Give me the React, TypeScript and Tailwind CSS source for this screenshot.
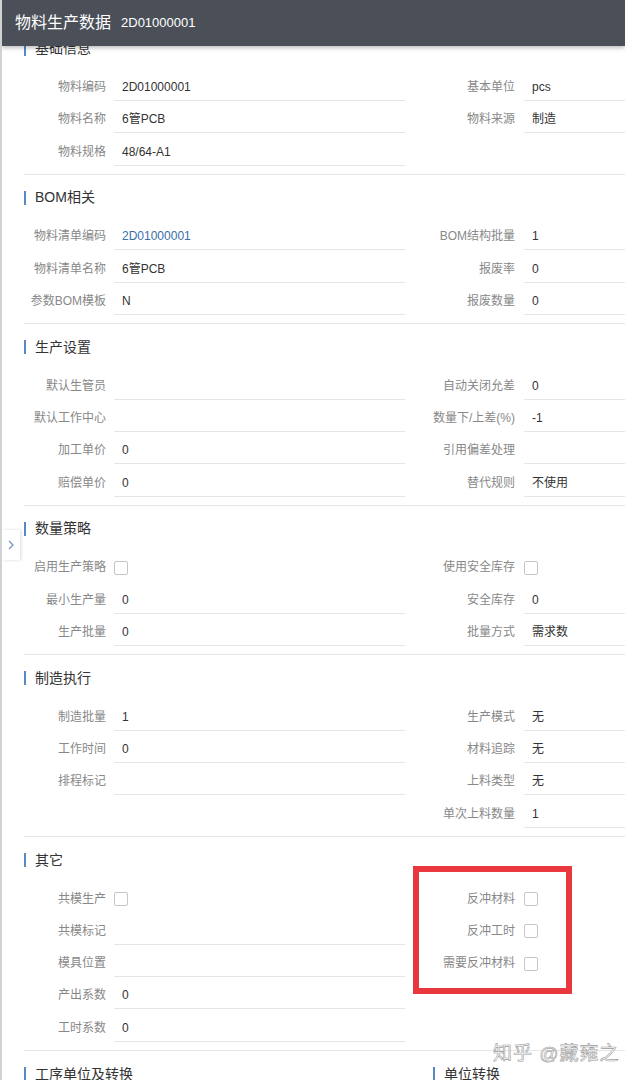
import React from 'react'

type Field = { label: string; value?: string; checkbox?: boolean; link?: boolean } | null
type Section = { title: string; rows: [Field, Field][] }

const sections: Section[] = [
    {
        title: '基础信息',
        rows: [
            [{ label: '物料编码', value: '2D01000001' }, { label: '基本单位', value: 'pcs' }],
            [{ label: '物料名称', value: '6管PCB' }, { label: '物料来源', value: '制造' }],
            [{ label: '物料规格', value: '48/64-A1' }, null],
        ],
    },
    {
        title: 'BOM相关',
        rows: [
            [{ label: '物料清单编码', value: '2D01000001', link: true }, { label: 'BOM结构批量', value: '1' }],
            [{ label: '物料清单名称', value: '6管PCB' }, { label: '报废率', value: '0' }],
            [{ label: '参数BOM模板', value: 'N' }, { label: '报废数量', value: '0' }],
        ],
    },
    {
        title: '生产设置',
        rows: [
            [{ label: '默认生管员', value: '' }, { label: '自动关闭允差', value: '0' }],
            [{ label: '默认工作中心', value: '' }, { label: '数量下/上差(%)', value: '-1' }],
            [{ label: '加工单价', value: '0' }, { label: '引用偏差处理', value: '' }],
            [{ label: '赔偿单价', value: '0' }, { label: '替代规则', value: '不使用' }],
        ],
    },
    {
        title: '数量策略',
        rows: [
            [{ label: '启用生产策略', checkbox: true }, { label: '使用安全库存', checkbox: true }],
            [{ label: '最小生产量', value: '0' }, { label: '安全库存', value: '0' }],
            [{ label: '生产批量', value: '0' }, { label: '批量方式', value: '需求数' }],
        ],
    },
    {
        title: '制造执行',
        rows: [
            [{ label: '制造批量', value: '1' }, { label: '生产模式', value: '无' }],
            [{ label: '工作时间', value: '0' }, { label: '材料追踪', value: '无' }],
            [{ label: '排程标记', value: '' }, { label: '上料类型', value: '无' }],
            [null, { label: '单次上料数量', value: '1' }],
        ],
    },
    {
        title: '其它',
        rows: [
            [{ label: '共模生产', checkbox: true }, { label: '反冲材料', checkbox: true }],
            [{ label: '共模标记', value: '' }, { label: '反冲工时', checkbox: true }],
            [{ label: '模具位置', value: '' }, { label: '需要反冲材料', checkbox: true }],
            [{ label: '产出系数', value: '0' }, null],
            [{ label: '工时系数', value: '0' }, null],
        ],
    },
]

function SectionTitle({ text }: { text: string }) {
    return (
        <div className="flex items-center h-[20px] gap-[9px]">
            <span className="w-[2px] h-[14px] bg-[#5a87c0]" />
            <span className="text-[14px] text-[#333]">{text}</span>
        </div>
    )
}

function Cell({ field, gap }: { field: Field; gap: string }) {
    if (!field) return <div />
    return (
        <div className={`grid grid-cols-[82px_1fr] ${gap}`}>
            <div className="text-right leading-[27px] text-[12px] text-[#888] whitespace-nowrap">{field.label}</div>
            {field.checkbox ? (
                <div className="pt-[6.5px]">
                    <div className="w-[14px] h-[14px] border border-[#c6c6c6] rounded-[2px] bg-white" />
                </div>
            ) : (
                <div
                    className={`h-[27px] border-b border-[#e6e6e6] pl-[8px] leading-[26px] text-[12px] ${
                        field.link ? 'text-[#3a6ea8]' : 'text-[#333]'
                    }`}
                >
                    {field.value}
                </div>
            )}
        </div>
    )
}

export default function App() {
    return (
        <div
            className="relative w-[625px] h-[1080px] overflow-hidden bg-white border-l-2 border-[#d2d2d2]"
            style={{ fontFamily: '"Liberation Sans", "Noto Sans CJK SC", sans-serif' }}
        >
            {/* fixed page header */}
            <header className="absolute top-0 left-0 right-0 z-20 h-[46px] bg-[#4b5058] flex items-center gap-[10px] pl-[13px] shadow-[0_2px_4px_rgba(0,0,0,0.25)]">
                <span className="text-[16px] text-white">物料生产数据</span>
                <span className="text-[13px] text-white">2D01000001</span>
            </header>

            {/* collapse tab */}
            <div className="absolute left-0 top-[530px] z-10 w-[18px] h-[30px] bg-white shadow-[1px_0_3px_rgba(0,0,0,0.15)] flex items-center justify-center">
                <svg width="6" height="10" viewBox="0 0 6 10" fill="none" stroke="#6f94c4" strokeWidth="1.2">
                    <path d="M1 1l4 4-4 4" />
                </svg>
            </div>

            <div className="pt-[25.5px] ml-[22px]">
                {sections.map((s) => (
                    <section key={s.title} className="border-b border-[#e6e6e6] pt-[13px] pb-[3px]">
                        <SectionTitle text={s.title} />
                        <div className="mt-[15.5px]">
                            {s.rows.map((r, i) => (
                                <div key={i} className="grid grid-cols-[381px_1fr] gap-x-[28px] h-[32.3px]">
                                    <Cell field={r[0]} gap="gap-x-[8px]" />
                                    <Cell field={r[1]} gap="gap-x-[9px]" />
                                </div>
                            ))}
                        </div>
                    </section>
                ))}
                <section className="pt-[13px] grid grid-cols-[381px_1fr] gap-x-[28px]">
                    <SectionTitle text="工序单位及转换" />
                    <SectionTitle text="单位转换" />
                </section>
            </div>

            {/* annotation box */}
            <div className="absolute left-[411px] top-[866px] w-[159px] h-[128px] border-[6px] border-[#e8383d]" />

            {/* watermark */}
            <div className="absolute left-[491px] top-[1040px] text-[19px] text-white/90 tracking-[1px] [-webkit-text-stroke:0.6px_#9a9a9a]">
                知乎 @藏雍之
            </div>
        </div>
    )
}
